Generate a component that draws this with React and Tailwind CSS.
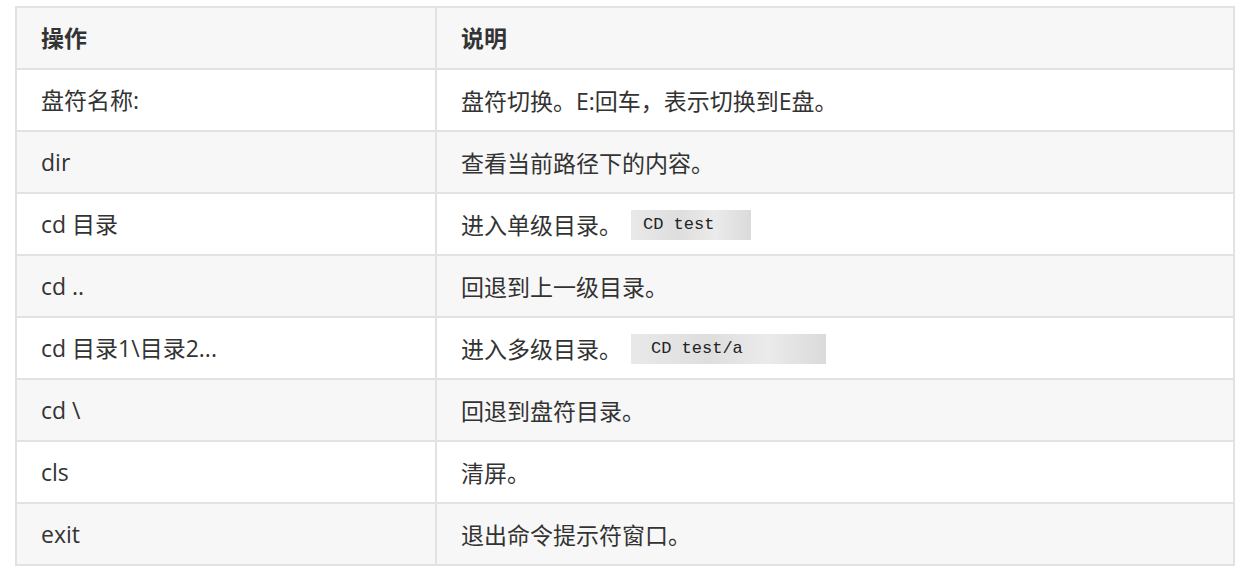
const rows = [
  { op: '盘符名称:', desc: '盘符切换。E:回车，表示切换到E盘。' },
  { op: 'dir', desc: '查看当前路径下的内容。' },
  { op: 'cd 目录', desc: '进入单级目录。', code: 'CD test', codeW: 'w-[120px] pl-3' },
  { op: 'cd ..', desc: '回退到上一级目录。' },
  { op: 'cd 目录1\\目录2...', desc: '进入多级目录。', code: 'CD test/a', codeW: 'w-[195px] pl-5' },
  { op: 'cd \\', desc: '回退到盘符目录。' },
  { op: 'cls', desc: '清屏。' },
  { op: 'exit', desc: '退出命令提示符窗口。' },
];

export default function App() {
  return (
    <div
      className="min-h-screen bg-white pt-[6px] pl-[15px] text-[#333]"
      style={{ fontFamily: "'Open Sans', 'Noto Sans CJK SC', sans-serif" }}
    >
      <table className="w-[1220px] border-collapse text-[23px]">
        <thead>
          <tr className="h-[62px] bg-[#f7f7f7]">
            <th className="w-[420px] border-2 border-[#e2e2e2] pl-6 text-left font-bold">操作</th>
            <th className="border-2 border-[#e2e2e2] pl-6 text-left font-bold">说明</th>
          </tr>
        </thead>
        <tbody>
          {rows.map((r, i) => (
            <tr key={i} className={i % 2 === 1 ? 'h-[62px] bg-[#f7f7f7]' : 'h-[62px] bg-white'}>
              <td className="border-2 border-[#e2e2e2] pl-6">{r.op}</td>
              <td className="border-2 border-[#e2e2e2] pl-6">
                <span className="align-middle">{r.desc}</span>
                {r.code && (
                  <span
                    className={`ml-[9px] inline-block h-[30px] align-middle leading-[30px] text-[17px] text-[#222] bg-[linear-gradient(90deg,#e9e9e9_0%,#dedede_40%,#ebebeb_70%,#dadada_100%)] ${r.codeW}`}
                    style={{ fontFamily: "'Liberation Mono', monospace" }}
                  >
                    {r.code}
                  </span>
                )}
              </td>
            </tr>
          ))}
        </tbody>
      </table>
    </div>
  );
}
